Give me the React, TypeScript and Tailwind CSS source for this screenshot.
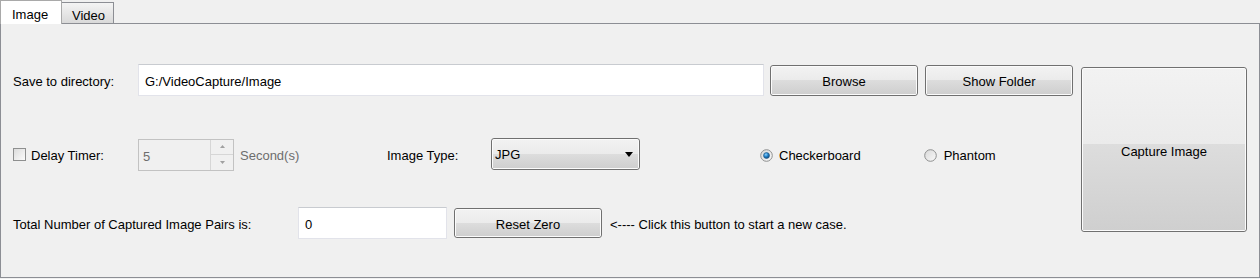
import React from "react";

const font = { fontFamily: '"Liberation Sans", Arial, sans-serif' };

function Btn({ label, className, top = "flex-1" }: { label: string; className: string; top?: string }) {
  return (
    <div
      className={`relative flex items-center justify-center rounded-[3px] border border-[#707070] overflow-hidden ${className}`}
    >
      <div className="absolute inset-0 flex flex-col rounded-[2px] border border-white/70">
        <div className={`${top} bg-gradient-to-b from-[#f2f2f2] to-[#ebebeb]`} />
        <div className="flex-1 bg-gradient-to-b from-[#dddddd] to-[#cfcfcf]" />
      </div>
      <span className="relative pt-[4px] text-[13px] text-black">{label}</span>
    </div>
  );
}

function TextBox({ value, className }: { value: string; className: string }) {
  return (
    <div
      className={`flex items-center bg-white border border-[#e2e3ea] border-t-[#c8cbd0] pl-[6px] pt-[4px] text-[13px] text-black ${className}`}
    >
      {value}
    </div>
  );
}

function Radio({ checked }: { checked: boolean }) {
  return (
    <svg width="13" height="13" viewBox="0 0 13 13">
      <defs>
        <linearGradient id={checked ? "rgc" : "rgu"} x1="0" y1="0" x2="1" y2="1">
          <stop offset="0" stopColor="#d8d8d8" />
          <stop offset="1" stopColor="#fafafa" />
        </linearGradient>
        <radialGradient id="dot" cx="0.4" cy="0.35" r="0.7">
          <stop offset="0" stopColor="#8fd3ff" />
          <stop offset="0.5" stopColor="#1f7fc6" />
          <stop offset="1" stopColor="#0b3f73" />
        </radialGradient>
      </defs>
      <circle cx="6.5" cy="6.5" r="5.8" fill={`url(#${checked ? "rgc" : "rgu"})`} stroke="#8e8f8f" strokeWidth="1" />
      {checked && <circle cx="6.5" cy="6.5" r="3" fill="url(#dot)" stroke="#2c5d85" strokeWidth="0.6" />}
    </svg>
  );
}

export default function App() {
  return (
    <div className="w-[1260px] h-[279px] bg-[#f0f0f0] text-[13px] text-black overflow-hidden" style={font}>
      {/* tab bar */}
      <div className="flex items-end h-[23px]">
        <div className="relative z-10 -mb-px h-[24px] w-[62px] bg-white border border-b-0 border-[#a9a9a9] flex items-start pl-[11px] pt-[4px]">
          Image
        </div>
        <div className="h-[21px] w-[52px] border border-l-0 border-b-0 border-[#8c8e94] bg-gradient-to-b from-[#f4f4f4] to-[#d9d9d9] flex items-start pl-[10px] pt-[3px]">
          Video
        </div>
      </div>
      {/* pane */}
      <div className="relative h-[255px] w-[1260px] border border-[#8c8e94] flex">
        <div className="flex flex-col pl-[12px] pt-[40px]">
          {/* row 1 */}
          <div className="flex items-center h-[32px]">
            <div className="w-[125px] pt-[4px]">Save to directory:</div>
            <TextBox value="G:/VideoCapture/Image" className="w-[626px] h-[32px]" />
            <Btn label="Browse" className="ml-[6px] w-[148px] h-[31px]" />
            <Btn label="Show Folder" className="ml-[7px] w-[148px] h-[31px]" />
          </div>
          {/* row 2 */}
          <div className="flex items-center h-[33px] mt-[41px]">
            <div className="flex items-center w-[125px] pt-[2px]">
              <div className="w-[13px] h-[13px] border border-[#8e8f8f] bg-gradient-to-br from-[#dcdcdc] to-[#fbfbfb]" />
              <span className="ml-[5px] pt-[2px]">Delay Timer:</span>
            </div>
            <div className="flex w-[96px] h-[32px] mt-[2px] border border-[#c2c2c2] bg-[#f0f0f0]">
              <div className="flex-1 flex items-center pl-[4px] pt-[4px] text-[#6d6d6d]">5</div>
              <div className="w-[23px] flex flex-col border-l border-[#d6d6d6]">
                <div className="flex-1 flex items-center justify-center border-b border-[#d6d6d6]">
                  <svg width="5" height="3" viewBox="0 0 5 3"><path d="M0 3 L2.5 0 L5 3 Z" fill="#a0a0a0" /></svg>
                </div>
                <div className="flex-1 flex items-center justify-center">
                  <svg width="5" height="3" viewBox="0 0 5 3"><path d="M0 0 L2.5 3 L5 0 Z" fill="#a0a0a0" /></svg>
                </div>
              </div>
            </div>
            <div className="ml-[6px] w-[147px] pt-[4px] text-[#6d6d6d]">Second(s)</div>
            <div className="w-[104px] pt-[4px]">Image Type:</div>
            <div className="relative flex items-center w-[149px] h-[32px] rounded-[3px] border border-[#707070] overflow-hidden">
              <div className="absolute inset-0 flex flex-col border border-white/70 rounded-[2px]">
                <div className="flex-1 bg-gradient-to-b from-[#f2f2f2] to-[#ebebeb]" />
                <div className="flex-1 bg-gradient-to-b from-[#dddddd] to-[#cfcfcf]" />
              </div>
              <span className="relative pl-[3px] pt-[3px]">JPG</span>
              <svg className="absolute right-[6px] top-[13px]" width="8" height="5" viewBox="0 0 8 5">
                <path d="M0 0 L8 0 L4 5 Z" fill="#000" />
              </svg>
            </div>
            <div className="ml-[120px] flex items-center pt-[3px]">
              <Radio checked />
              <span className="ml-[6px] pt-[1px]">Checkerboard</span>
            </div>
            <div className="ml-[63px] flex items-center pt-[3px]">
              <Radio checked={false} />
              <span className="ml-[7px] pt-[1px]">Phantom</span>
            </div>
          </div>
          {/* row 3 */}
          <div className="flex items-center h-[32px] mt-[37px]">
            <div className="w-[285px] pt-[4px]">Total Number of Captured Image Pairs is:</div>
            <TextBox value="0" className="w-[149px] h-[32px] pl-[4px]" />
            <Btn label="Reset Zero" className="ml-[7px] w-[148px] h-[30px]" />
            <div className="ml-[8px] pt-[4px]">&lt;---- Click this button to start a new case.</div>
          </div>
        </div>
        <div className="absolute left-[1080px] top-[43px]">
          <Btn label="Capture Image" className="w-[166px] h-[165px]" top="h-[75px]" />
        </div>
      </div>
    </div>
  );
}
